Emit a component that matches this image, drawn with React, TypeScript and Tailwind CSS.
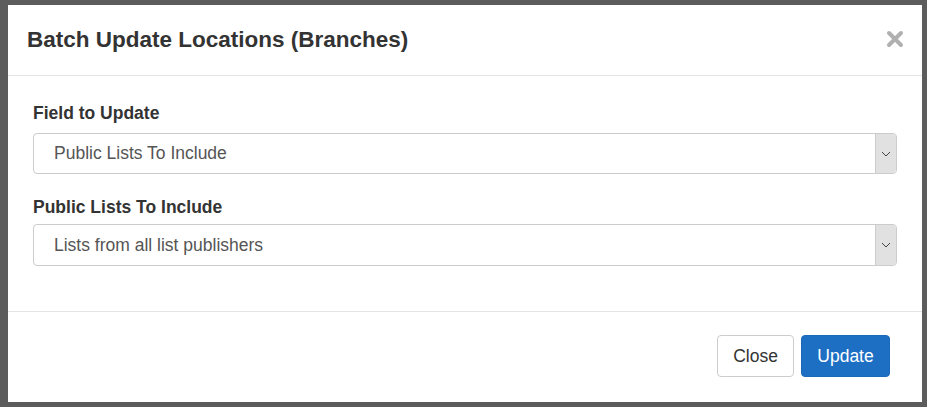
import React from "react";

const Chevron = () => (
  <svg width="10" height="6" viewBox="0 0 10 6" fill="none">
    <path d="M1 1l4 4 4-4" stroke="#444" strokeWidth="1" />
  </svg>
);

const SelectBox: React.FC<{ value: string; tall?: boolean }> = ({ value, tall }) => (
  <div className={tall ? "flex h-[42px] rounded-[4px] border border-[#cccccc] bg-white" : "flex h-[41px] rounded-[4px] border border-[#cccccc] bg-white"}>
    <div className="flex flex-1 items-center pl-[20px] text-[17.5px] text-[#555555]">{value}</div>
    <div className="flex w-[21px] items-center justify-center rounded-r-[4px] border-l border-[#cccccc] bg-[#e1e1e1]">
      <Chevron />
    </div>
  </div>
);

export default function App() {
  return (
    <div className="h-[407px] w-[927px] bg-[#5c5c5c] pb-[5px] pl-[8px] pr-[5px] pt-[5px] font-['Liberation_Sans',Arial,sans-serif]">
      <div className="flex h-full flex-col bg-white text-[#333333]">
        {/* header */}
        <div className="flex h-[71px] items-center justify-between border-b border-[#e5e5e5] pl-[19px] pr-[17px]">
          <h4 className="text-[22.5px] font-bold">Batch Update Locations (Branches)</h4>
          <button className="mb-[2px] flex h-[20px] w-[20px] items-center justify-center">
            <svg width="18" height="18" viewBox="0 0 18 18">
              <path d="M3 3l12 12M15 3L3 15" stroke="#b0b0b0" strokeWidth="4" strokeLinecap="round" />
            </svg>
          </button>
        </div>

        {/* body */}
        <div className="flex-1 px-[25px] pt-[25px]">
          <label className="block text-[17.5px] font-bold leading-[24px]">Field to Update</label>
          <div className="mt-[8px]">
            <SelectBox value="Public Lists To Include" />
          </div>
          <label className="mt-[21px] block text-[17.5px] font-bold leading-[24px]">Public Lists To Include</label>
          <div className="mt-[5px]">
            <SelectBox value="Lists from all list publishers" tall />
          </div>
        </div>

        {/* footer */}
        <div className="flex h-[91px] items-start justify-end gap-[7px] border-t border-[#e5e5e5] pr-[32px] pt-[23px]">
          <button className="h-[42px] w-[77px] rounded-[4px] border border-[#cccccc] bg-white text-[17.5px] text-[#333333]">
            Close
          </button>
          <button className="h-[42px] w-[89px] rounded-[4px] border border-[#1a69bb] bg-[#1d6fc4] text-[17.5px] text-white">
            Update
          </button>
        </div>
      </div>
    </div>
  );
}
